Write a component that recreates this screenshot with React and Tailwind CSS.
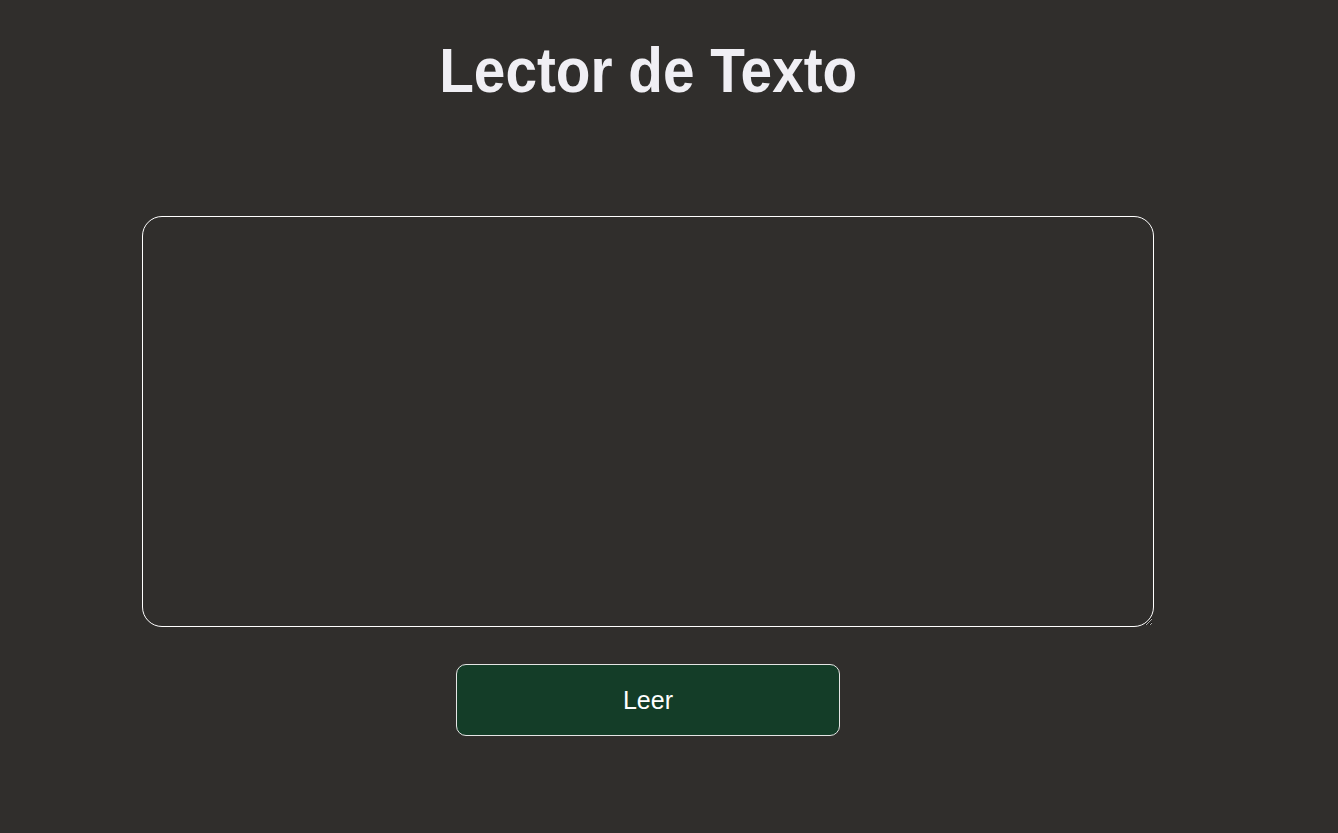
import React from 'react';

export default function App() {
  const [text, setText] = React.useState('');

  return (
    <div className="min-h-screen w-full bg-[#302e2c] font-['Liberation_Sans',Arial,sans-serif]">
      <div className="w-[1296px] flex flex-col items-center">
        <h1 className="mt-[34px] text-[63px] leading-[72px] font-bold text-[#f0eff4] scale-x-[0.9]">
          Lector de Texto
        </h1>
        <textarea
          value={text}
          onChange={(e) => setText(e.target.value)}
          className="mt-[110px] w-[1012px] h-[411px] rounded-[20px] border border-white bg-transparent text-white p-4 outline-none"
        />
        <button className="mt-[37px] w-[384px] h-[72px] rounded-[10px] border border-[#e5e5e5] bg-[#143d28] text-white text-[25px] pt-[2px]">
          Leer
        </button>
      </div>
    </div>
  );
}
